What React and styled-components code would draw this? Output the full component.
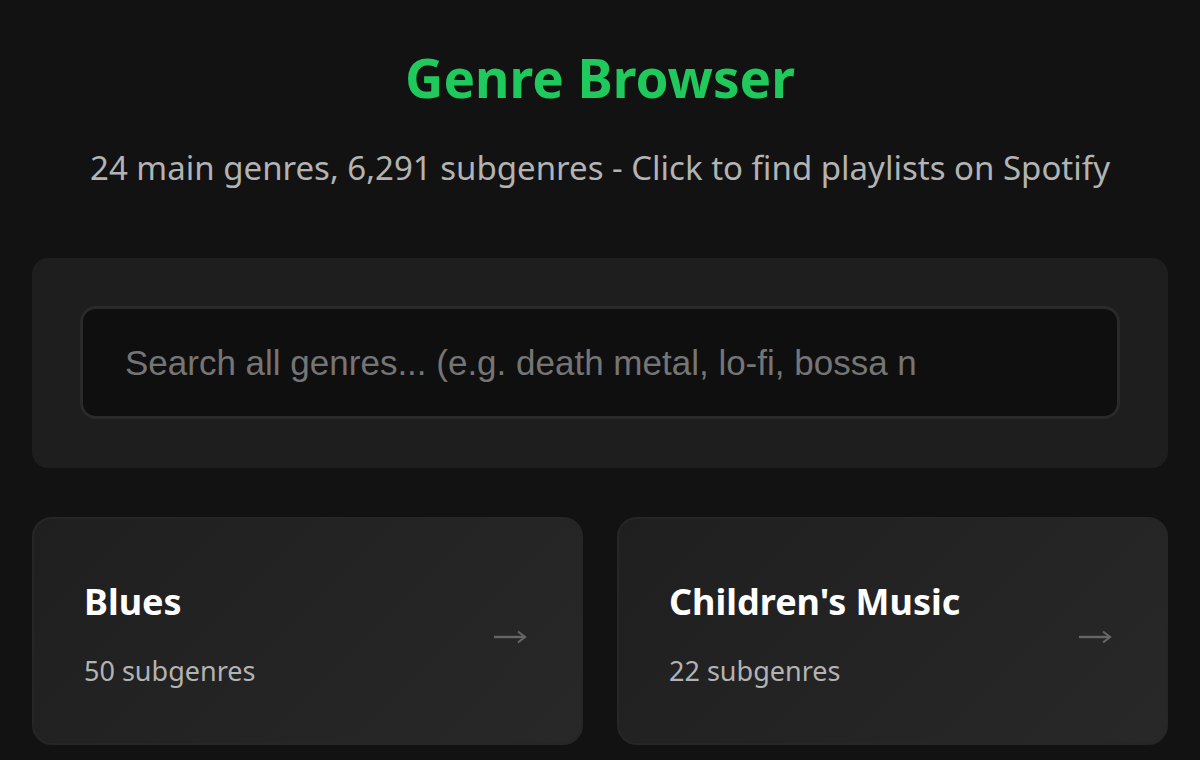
import React from "react";
import styled, { createGlobalStyle } from "styled-components";

const GlobalStyle = createGlobalStyle`
  * { box-sizing: border-box; }
  body {
    margin: 0;
    background-color: #121212;
    font-family: "Noto Sans", "Open Sans", sans-serif;
    color: #ffffff;
  }
`;

const genres = [
  { name: "Blues", count: 50 },
  { name: "Children's Music", count: 22 },
];

const ArrowIcon = () => (
  <svg width="34" height="16" viewBox="0 0 34 16" fill="none">
    <path d="M1 8h31" stroke="#666" strokeWidth="2.4" />
    <path d="M25 2.5L32 8l-7 5.5" stroke="#666" strokeWidth="2.2" />
  </svg>
);

const App = () => {
  return (
    <>
      <GlobalStyle />
      <Container>
        <Header>
          <Title>Genre Browser</Title>
          <Subtitle>
            24 main genres, 6,291 subgenres - Click to find playlists on Spotify
          </Subtitle>
        </Header>

        <SearchPanel>
          <SearchInput
            type="text"
            placeholder="Search all genres... (e.g. death metal, lo-fi, bossa nova)"
          />
        </SearchPanel>

        <Grid>
          {genres.map((g) => (
            <Card key={g.name}>
              <Info>
                <Name>{g.name}</Name>
                <Count>{g.count} subgenres</Count>
              </Info>
              <Arrow>
                <ArrowIcon />
              </Arrow>
            </Card>
          ))}
        </Grid>
      </Container>
    </>
  );
};

export default App;

const Container = styled.div`
  padding: 0 32px;
  display: flex;
  flex-direction: column;
`;
const Header = styled.div`
  text-align: center;
  padding-top: 42px;
  margin-bottom: 68px;
`;
const Title = styled.h1`
  margin: 0;
  font-size: 53px;
  font-weight: 700;
  line-height: 72px;
  color: #1fc95b;
`;
const Subtitle = styled.p`
  margin: 32px 0 0;
  font-size: 33px;
  line-height: 44px;
  color: #b3b3b3;
`;
const SearchPanel = styled.div`
  background-color: #1e1e1e;
  border-radius: 16px;
  padding: 48px 48px 49px;
  margin-bottom: 49px;
`;
const SearchInput = styled.input`
  display: block;
  width: 100%;
  height: 113px;
  padding: 0 200px 0 42px;
  background-color: #0f0f0f;
  border: 3px solid #2a2a2a;
  border-radius: 16px;
  color: #ffffff;
  font-family: "Liberation Sans", Arial, sans-serif;
  font-size: 35px;
  outline: none;
  &::placeholder {
    color: #757575;
  }
`;
const Grid = styled.div`
  display: grid;
  grid-template-columns: 1fr 1fr;
  gap: 34px;
`;
const Card = styled.div`
  height: 228px;
  padding: 0 54px 0 50px;
  display: flex;
  align-items: center;
  justify-content: space-between;
  background: linear-gradient(135deg, #1f1f1f 0%, #282828 100%);
  border: 2px solid #262626;
  border-radius: 20px;
`;
const Info = styled.div`
  display: flex;
  flex-direction: column;
  margin-top: 5px;
`;
const Name = styled.span`
  font-size: 36px;
  font-weight: 700;
  line-height: 48px;
  color: #ffffff;
  margin-bottom: 27px;
`;
const Count = styled.span`
  font-size: 27px;
  line-height: 36px;
  color: #b3b3b3;
`;
const Arrow = styled.span`
  display: flex;
  margin-top: 12px;
`;
